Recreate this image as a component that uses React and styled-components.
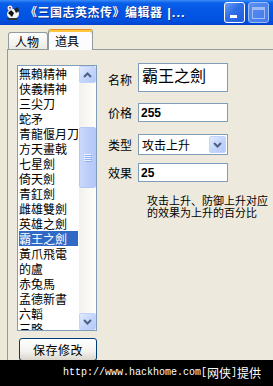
import React from 'react';
import styled, { createGlobalStyle } from 'styled-components';

const Global = createGlobalStyle`
  html, body { margin: 0; padding: 0; }
  body {
    width: 273px; height: 386px; overflow: hidden;
    background: #ece9d8;
    font-family: "Noto Sans CJK SC", "Liberation Sans", sans-serif;
  }
`;

const Window = styled.div`
  position: relative;
  width: 273px;
  height: 386px;
  overflow: hidden;
  display: flex;
  flex-direction: column;
  background: #ece9d8;
`;

const TitleBar = styled.div`
  flex: none;
  height: 25px;
  display: flex;
  align-items: center;
  padding-left: 4px;
  background: linear-gradient(to bottom, #3a8cf7 0, #0a5fe9 3px, #0457e5 40%, #0152e1 80%, #0043d0 100%);
`;

const TitleText = styled.div`
  margin-left: 4px;
  color: #fff;
  font-family: "Noto Sans CJK SC", sans-serif;
  font-size: 12px;
  font-weight: bold;
  letter-spacing: 0.5px;
  line-height: 16px;
  white-space: nowrap;
  text-shadow: 1px 1px #0b2a8c;
`;

const TitleTail = styled.span`
  font-family: "Liberation Sans", sans-serif;
  font-size: 13px;
  letter-spacing: 1px;
`;

const TitleButtons = styled.div`
  margin-left: auto;
  flex: none;
  display: flex;
  gap: 3px;
  padding-right: 4px;
`;

const CapButton = styled.div`
  box-sizing: border-box;
  width: 21px;
  height: 21px;
  border-radius: 3px;
  border: 1px solid ${p => (p.$disabled ? '#9fbcf6' : '#fff')};
  background: ${p =>
    p.$disabled
      ? 'linear-gradient(135deg, #5b90f2, #3f78ea)'
      : 'linear-gradient(135deg, #6d9ff7 0, #2f6ee8 45%, #1f5ce0 100%)'};
  display: flex;
  align-items: ${p => (p.$disabled ? 'center' : 'flex-end')};
  justify-content: ${p => (p.$disabled ? 'center' : 'flex-start')};
  padding: ${p => (p.$disabled ? '0' : '0 0 4px 5px')};
`;

const MinBar = styled.div`
  width: 7px;
  height: 3px;
  background: #fff;
`;

const MaxBox = styled.div`
  box-sizing: border-box;
  width: 13px;
  height: 12px;
  border: 1px solid #9dbbf5;
  border-top-width: 3px;
`;

const Body = styled.div`
  flex: 1;
  display: flex;
  flex-direction: column;
  padding: 4px 0 0 7px;
  min-height: 0;
`;

const TabStrip = styled.div`
  position: relative;
  z-index: 1;
  display: flex;
  align-items: flex-end;
  height: 20px;
  padding-left: 1px;
`;

const Tab = styled.div`
  box-sizing: border-box;
  width: ${p => (p.$active ? 45 : 40)}px;
  height: ${p => (p.$active ? 21 : 17)}px;
  margin-bottom: ${p => (p.$active ? -1 : 0)}px;
  border: 1px solid #919b9c;
  border-bottom: none;
  border-top-color: ${p => (p.$active ? '#e68b2c' : '#919b9c')};
  border-radius: 3px 3px 0 0;
  box-shadow: ${p => (p.$active ? 'inset 0 2px #ffc73c' : 'none')};
  background: ${p =>
    p.$active ? '#fcfcfe' : 'linear-gradient(to bottom, #fefefe, #f4f3ee 60%, #ebe9e0)'};
  padding: ${p => (p.$active ? '3px' : '1px')} 0 0 6px;
  font-size: 12px;
  line-height: 15px;
  color: #000;
  white-space: nowrap;
`;

const Panel = styled.div`
  box-sizing: border-box;
  flex: 1;
  width: 290px;
  border: 1px solid #919b9c;
  background: #edeadd;
  display: flex;
  align-items: flex-start;
  padding: 13px 0 0 9px;
`;

const LeftCol = styled.div`
  margin-top: 2px;
  display: flex;
  flex-direction: column;
  width: 80px;
`;

const ListBox = styled.div`
  box-sizing: border-box;
  width: 80px;
  height: 266px;
  border: 1px solid #7f9db9;
  background: #fff;
  display: flex;
  overflow: hidden;
`;

const Items = styled.div`
  flex: 1;
  padding: 0 1px;
  overflow: hidden;
`;

const Item = styled.div`
  height: 15px;
  font-size: 12px;
  line-height: 15px;
  white-space: nowrap;
  overflow: hidden;
  color: ${p => (p.$selected ? '#fff' : '#000')};
  background: ${p => (p.$selected ? '#316ac5' : 'transparent')};
`;

const ScrollBar = styled.div`
  width: 17px;
  display: flex;
  flex-direction: column;
  background: linear-gradient(to right, #f3f1ec, #fefefb);
`;

const ScrollBtn = styled.div`
  box-sizing: border-box;
  flex: none;
  width: 17px;
  height: 17px;
  border: 1px solid #c3d3fd;
  border-radius: 2px;
  background: linear-gradient(135deg, #e1eafe 0, #c5d6fc 50%, #b4c8f6 100%);
  display: flex;
  align-items: center;
  justify-content: center;
`;

const Track = styled.div`
  flex: 1;
`;

const Thumb = styled.div`
  box-sizing: border-box;
  margin-top: 44px;
  width: 17px;
  height: 61px;
  border: 1px solid #b4c8f6;
  border-radius: 2px;
  background: linear-gradient(to right, #cad8fd, #bccffb 50%, #b5c8f7);
  display: flex;
  flex-direction: column;
  align-items: center;
  justify-content: center;
  gap: 1px;
`;

const Grip = styled.div`
  width: 7px;
  height: 1px;
  background: #eef4fe;
  box-shadow: 1px 1px #8cb0f8;
`;

const SaveButton = styled.div`
  box-sizing: border-box;
  margin: 7px 0 0 2px;
  width: 78px;
  height: 23px;
  border: 1px solid #003c74;
  border-radius: 3px;
  background: linear-gradient(to bottom, #ffffff, #f3f2ee 60%, #d9d5cb);
  display: flex;
  align-items: center;
  justify-content: center;
  font-size: 12px;
  line-height: 14px;
  letter-spacing: 0.5px;
`;

const Form = styled.div`
  margin-left: 11px;
  display: flex;
  flex-direction: column;
`;

const Row = styled.div`
  display: flex;
  align-items: ${p => (p.$top ? 'flex-start' : 'center')};
  margin-top: ${p => p.$gap || 0}px;
`;

const Label = styled.div`
  width: 30px;
  font-size: 12px;
  line-height: 14px;
  padding-top: ${p => p.$pad || 0}px;
  white-space: nowrap;
`;

const Field = styled.div`
  box-sizing: border-box;
  width: 90px;
  height: ${p => p.$h}px;
  border: 1px solid #7f9db9;
  background: #fff;
  display: flex;
  align-items: ${p => (p.$big ? 'flex-start' : 'center')};
  padding: ${p => (p.$big ? '1px 3px' : '0 2px')};
  font-family: ${p => (p.$num ? '"Liberation Sans", sans-serif' : '"Noto Sans CJK SC", sans-serif')};
  font-weight: ${p => (p.$num ? 'bold' : 'normal')};
  font-size: ${p => (p.$big ? 16 : 12)}px;
  line-height: ${p => (p.$big ? 20 : 14)}px;
  white-space: nowrap;
`;

const Select = styled.div`
  box-sizing: border-box;
  width: 90px;
  height: 21px;
  border: 1px solid #7f9db9;
  background: #fff;
  display: flex;
  align-items: center;
  padding: 1px 1px 1px 3px;
  font-size: 12px;
  line-height: 14px;
`;

const SelectText = styled.div`
  flex: 1;
`;

const DropBtn = styled(ScrollBtn)`
  height: 17px;
`;

const Note = styled.div`
  margin: 12px 0 0 39px;
  font-size: 11px;
  line-height: 12px;
  white-space: nowrap;
`;

const Watermark = styled.div`
  position: absolute;
  left: 0;
  right: 0;
  bottom: 0;
  height: 26px;
  background: #000;
  color: #fff;
  display: flex;
  align-items: center;
  padding: 0 0 2px 63px;
  box-sizing: border-box;
  white-space: nowrap;
`;

const MonoPart = styled.span`
  font-family: "Liberation Mono", monospace;
  font-size: 10px;
`;

const CjkPart = styled.span`
  font-family: "Noto Sans CJK SC", sans-serif;
  font-size: 12px;
`;

const Chevron = ({ up }) => (
  <svg width="9" height="6" viewBox="0 0 9 6">
    <path
      d={up ? 'M1 5 L4.5 1.5 L8 5' : 'M1 1 L4.5 4.5 L8 1'}
      fill="none"
      stroke="#4d6185"
      strokeWidth="2"
    />
  </svg>
);

const AppIcon = () => (
  <svg width="17" height="17" viewBox="0 0 17 17">
    <ellipse cx="9" cy="10" rx="6" ry="5" fill="#f4f4f4" />
    <path d="M4 9 L7 6 L10 9 L8 13 Z" fill="#111" />
    <path d="M10 5 L14 3 L15 7 L12 9 Z" fill="#222" />
    <circle cx="6" cy="4" r="2.5" fill="#eee" />
    <path d="M5 3 L7 3 L6 6 Z" fill="#b22" />
    <path d="M3 14 L14 14 L13 16 L4 16 Z" fill="#333" />
  </svg>
);

const items = [
  '無賴精神', '侠義精神', '三尖刀', '蛇矛', '青龍偃月刀', '方天畫戟', '七星劍',
  '倚天劍', '青釭劍', '雌雄雙劍', '英雄之劍', '霸王之劍', '黃爪飛電', '的盧',
  '赤兔馬', '孟德新書', '六韜', '三略',
];

export default function App() {
  return (
    <Window>
      <Global />
      <TitleBar>
        <AppIcon />
        <TitleText>
          《三国志英杰传》编辑器<TitleTail> |...</TitleTail>
        </TitleText>
        <TitleButtons>
          <CapButton><MinBar /></CapButton>
          <CapButton $disabled><MaxBox /></CapButton>
        </TitleButtons>
      </TitleBar>
      <Body>
        <TabStrip>
          <Tab>人物</Tab>
          <Tab $active>道具</Tab>
        </TabStrip>
        <Panel>
          <LeftCol>
            <ListBox>
              <Items>
                {items.map(it => (
                  <Item key={it} $selected={it === '霸王之劍'}>{it}</Item>
                ))}
              </Items>
              <ScrollBar>
                <ScrollBtn><Chevron up /></ScrollBtn>
                <Track>
                  <Thumb><Grip /><Grip /><Grip /><Grip /></Thumb>
                </Track>
                <ScrollBtn><Chevron /></ScrollBtn>
              </ScrollBar>
            </ListBox>
            <SaveButton>保存修改</SaveButton>
          </LeftCol>
          <Form>
            <Row $top>
              <Label $pad={10}>名称</Label>
              <Field $h={29} $big>霸王之劍</Field>
            </Row>
            <Row $gap={11}>
              <Label>价格</Label>
              <Field $h={19} $num>255</Field>
            </Row>
            <Row $gap={12}>
              <Label>类型</Label>
              <Select>
                <SelectText>攻击上升</SelectText>
                <DropBtn><Chevron /></DropBtn>
              </Select>
            </Row>
            <Row $gap={8}>
              <Label>效果</Label>
              <Field $h={19} $num>25</Field>
            </Row>
            <Note>
              攻击上升、防御上升对应<br />的效果为上升的百分比
            </Note>
          </Form>
        </Panel>
      </Body>
      <Watermark>
        <MonoPart>http://www.hackhome.com</MonoPart>
        <MonoPart>[</MonoPart><CjkPart>网侠</CjkPart><MonoPart>]</MonoPart>
        <CjkPart>提供</CjkPart>
      </Watermark>
    </Window>
  );
}
